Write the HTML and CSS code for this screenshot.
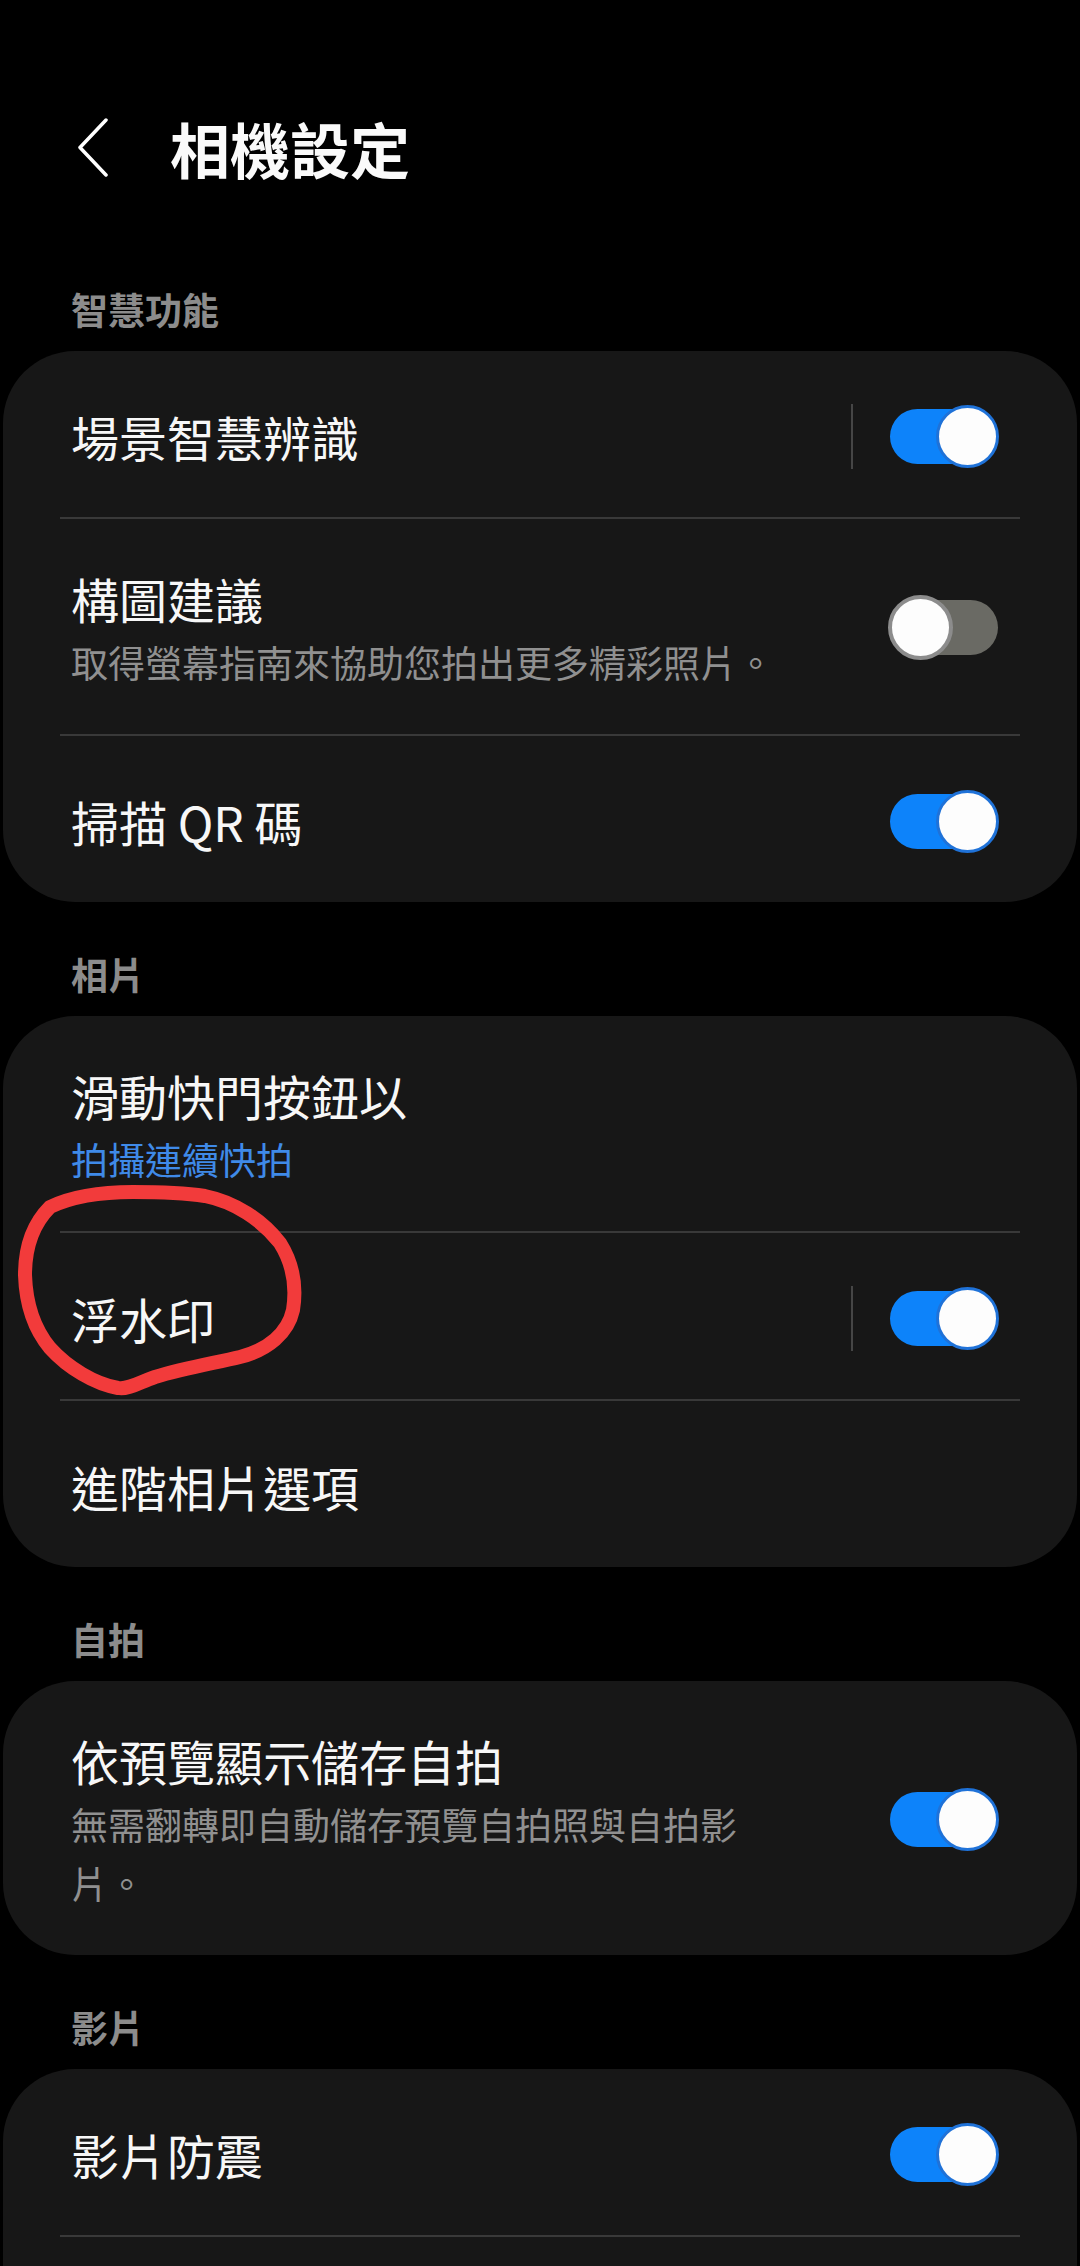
FILE: index.html
```html
<!DOCTYPE html>
<html lang="zh-Hant">
  <head>
    <meta charset="UTF-8" />
    <meta name="viewport" content="width=device-width, initial-scale=1.0" />
    <title>相機設定</title>
    <link rel="stylesheet" href="styles.css">
  </head>
  <body>
    <header class="topbar">
      <svg class="back" width="32" height="60" viewBox="0 0 32 60">
        <polyline points="29,2 3,29.5 29,57" fill="none" stroke="#fff" stroke-width="3.5" stroke-linecap="round" stroke-linejoin="round" />
      </svg>
      <h1 class="title">相機設定</h1>
    </header>

    <h2 class="section">智慧功能</h2>
    <div class="card">
      <div class="row">
        <div class="text"><div class="label">場景智慧辨識</div></div>
        <div class="sep"></div>
        <div class="toggle on"><div class="knob"></div></div>
      </div>
      <div class="divider"></div>
      <div class="row two">
        <div class="text">
          <div class="label">構圖建議</div>
          <div class="sub">取得螢幕指南來協助您拍出更多精彩照片。</div>
        </div>
        <div class="toggle"><div class="knob"></div></div>
      </div>
      <div class="divider"></div>
      <div class="row">
        <div class="text"><div class="label">掃描 QR 碼</div></div>
        <div class="toggle on"><div class="knob"></div></div>
      </div>
    </div>

    <h2 class="section">相片</h2>
    <div class="card">
      <div class="row two">
        <div class="text">
          <div class="label">滑動快門按鈕以</div>
          <div class="sub blue">拍攝連續快拍</div>
        </div>
      </div>
      <div class="divider"></div>
      <div class="row">
        <div class="text"><div class="label">浮水印</div></div>
        <div class="sep"></div>
        <div class="toggle on"><div class="knob"></div></div>
      </div>
      <div class="divider"></div>
      <div class="row">
        <div class="text"><div class="label">進階相片選項</div></div>
      </div>
    </div>

    <h2 class="section">自拍</h2>
    <div class="card">
      <div class="row two">
        <div class="text">
          <div class="label">依預覽顯示儲存自拍</div>
          <div class="sub">無需翻轉即自動儲存預覽自拍照與自拍影片。</div>
        </div>
        <div class="toggle on"><div class="knob"></div></div>
      </div>
    </div>

    <h2 class="section">影片</h2>
    <div class="card last">
      <div class="row">
        <div class="text"><div class="label">影片防震</div></div>
        <div class="toggle on"><div class="knob"></div></div>
      </div>
      <div class="divider"></div>
    </div>

    <!-- red hand-drawn mark around the watermark row -->
    <svg class="mark" width="1080" height="2266" viewBox="0 0 1080 2266">
      <path d="M 50 1207 C 75 1195, 105 1192, 133 1192 C 160 1192, 185 1193, 205 1196 C 235 1202, 262 1220, 280 1243 C 292 1262, 297 1285, 293 1310 C 288 1333, 268 1350, 240 1357 C 215 1363, 185 1368, 155 1377 C 140 1382, 128 1390, 118 1388 C 95 1384, 68 1368, 50 1348 C 35 1330, 26 1305, 25 1275 C 25 1250, 32 1225, 50 1207 Z"
        fill="none" stroke="#f23b3b" stroke-width="14" stroke-linecap="round" stroke-linejoin="round" />
    </svg>
  </body>
</html>
```

FILE: styles.css
```css
body {
  margin: 0;
  width: 1080px;
  background-color: #000;
  color: #f7f7f7;
  font-family: "Noto Sans CJK TC", "Noto Sans", sans-serif;
  position: relative;
  overflow: hidden;
}

/* Top bar */
.topbar {
  display: flex;
  align-items: center;
  padding: 108px 0 49px 77px;
}

.back {
  display: block;
}

.title {
  margin: 0 0 0 61px;
  font-size: 60px;
  font-weight: bold;
  line-height: 80px;
  color: #fafafa;
}

/* Section headers */
.section {
  margin: 47px 0 17px 71px;
  font-size: 37px;
  font-weight: bold;
  line-height: 50px;
  color: #8c8c8c;
}

/* Cards */
.card {
  margin: 0 3px;
  background-color: #171717;
  border-radius: 72px;
}

.card.last {
  padding-bottom: 120px;
  border-radius: 72px 72px 0 0;
}

.row {
  display: flex;
  align-items: center;
  padding: 50px 79px 46px 68px;
}

.row.two {
  padding-top: 44px;
  padding-bottom: 42px;
}

.text {
  flex: 1;
  min-width: 0;
}

.label {
  font-size: 48px;
  line-height: 70px;
}

.sub {
  max-width: 718px;
  font-size: 37px;
  line-height: 59px;
  color: #909090;
}

.sub.blue {
  color: #3f8ae8;
}

.divider {
  height: 2px;
  margin: 0 57px;
  background-color: #393939;
}

.sep {
  width: 2px;
  height: 65px;
  margin-right: 37px;
  background-color: #464646;
}

/* Switches */
.toggle {
  display: flex;
  align-items: center;
  width: 108px;
  height: 55px;
  border-radius: 28px;
  background-color: #6a6a64;
}

.knob {
  box-sizing: border-box;
  width: 65px;
  height: 65px;
  margin-left: -2px;
  border-radius: 50%;
  background-color: #fdfdfd;
  border: 4px solid #8c8c8c;
}

.toggle.on {
  background-color: #0d83fa;
}

.toggle.on .knob {
  width: 63px;
  height: 63px;
  margin-left: auto;
  margin-right: -1px;
  border: 3px solid #1f72d8;
}

/* Annotation overlay */
.mark {
  position: absolute;
  left: 0;
  top: 0;
  pointer-events: none;
}
```
